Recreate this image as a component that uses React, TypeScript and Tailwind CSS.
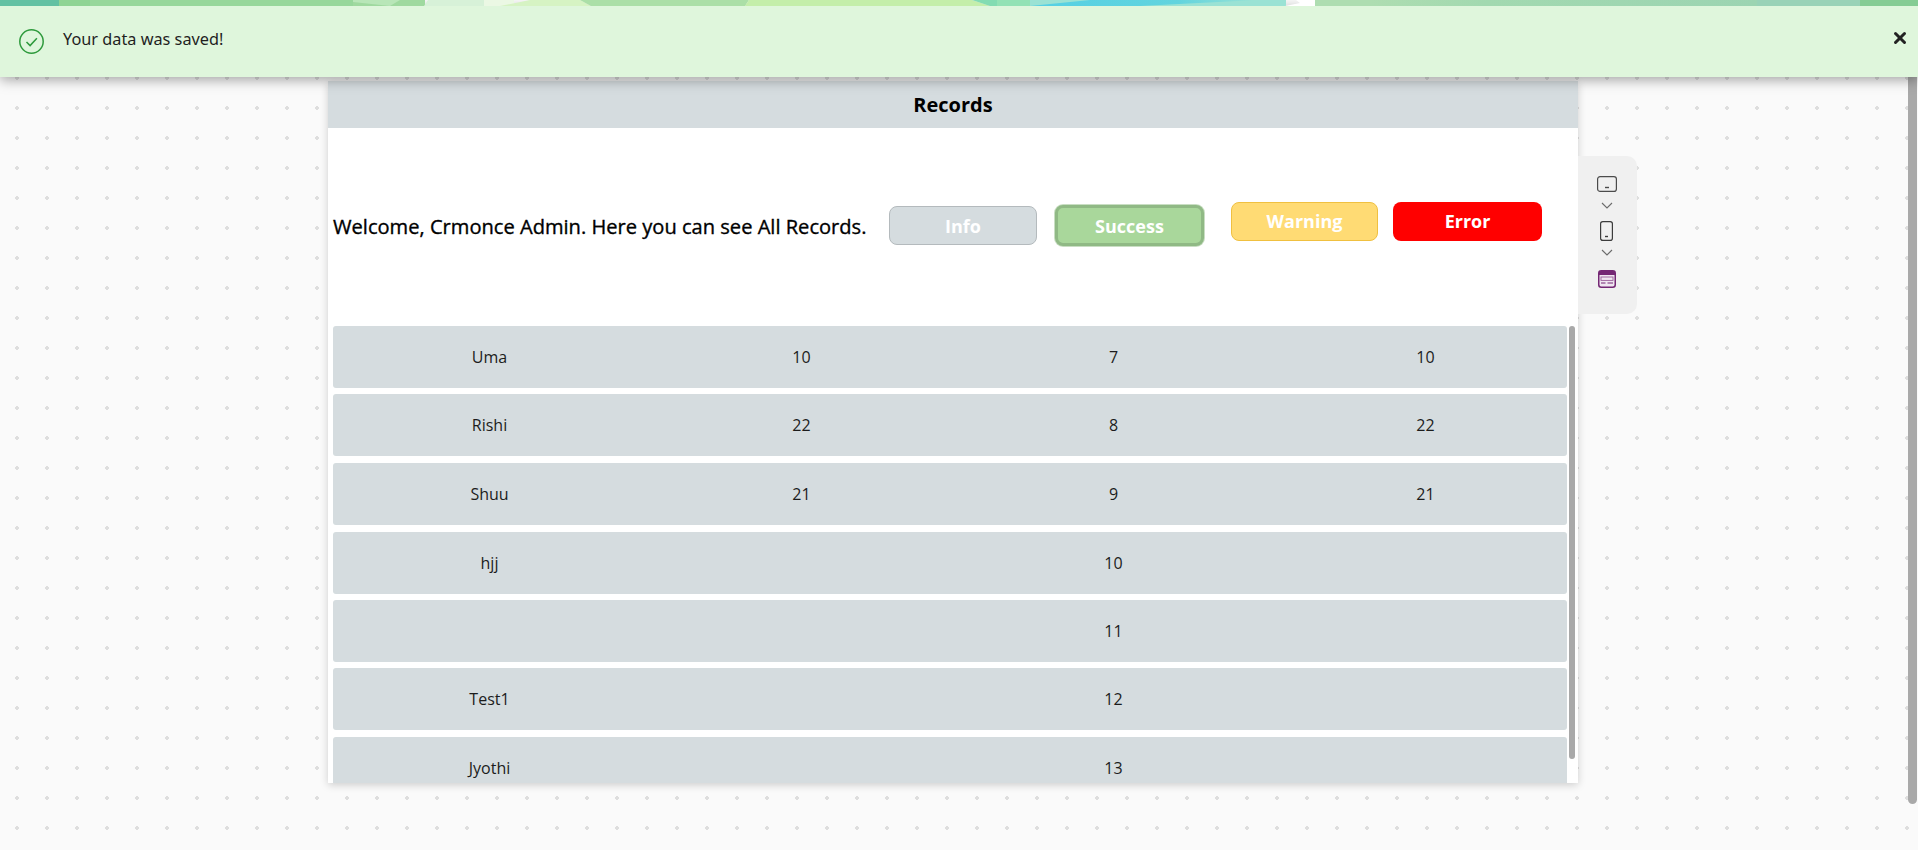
import { X } from 'lucide-react';

const rows = [
  { name: 'Uma', a: '10', b: '7', c: '10' },
  { name: 'Rishi', a: '22', b: '8', c: '22' },
  { name: 'Shuu', a: '21', b: '9', c: '21' },
  { name: 'hjj', a: '', b: '10', c: '' },
  { name: '', a: '', b: '11', c: '' },
  { name: 'Test1', a: '', b: '12', c: '' },
  { name: 'Jyothi', a: '', b: '13', c: '' },
];

function Row({ name, a, b, c }: { name: string; a: string; b: string; c: string }) {
  return (
    <div className="grid grid-cols-[312px_312px_312px_312px] h-[62px] shrink-0 items-center overflow-hidden pl-[1px] bg-[#d5dcdf] rounded-[3px] text-[16px] text-[#1c1c1c] text-center [&:nth-child(4)]:mt-[0.2px]">
      <span>{name}</span>
      <span>{a}</span>
      <span>{b}</span>
      <span>{c}</span>
    </div>
  );
}

function SidePanel() {
  return (
    <div className="mt-[75px] w-[59px] h-[158px] bg-[#f0f0f0] rounded-r-[10px] flex flex-col items-center pt-[20px] pr-[2px]">
      <svg width="20" height="16" viewBox="0 0 20 16" fill="none" stroke="#4b4b4b" strokeWidth="1.2">
        <rect x="0.6" y="0.6" width="18.8" height="14.8" rx="2.5" />
        <path d="M8 11.5h4" strokeWidth="1.4" />
      </svg>
      <svg className="mt-[10px]" width="12" height="7" viewBox="0 0 12 7" fill="none" stroke="#6b6b6b" strokeWidth="1.1">
        <path d="M1 1l5 5 5-5" />
      </svg>
      <svg className="mt-[12px]" width="13" height="20" viewBox="0 0 13 20" fill="none" stroke="#3c3c3c" strokeWidth="1.2">
        <rect x="0.6" y="0.6" width="11.8" height="18.8" rx="2.2" />
        <path d="M5 15.5h3" strokeWidth="1.4" />
      </svg>
      <svg className="mt-[8px]" width="12" height="7" viewBox="0 0 12 7" fill="none" stroke="#6b6b6b" strokeWidth="1.1">
        <path d="M1 1l5 5 5-5" />
      </svg>
      <svg className="mt-[14px]" width="18" height="18" viewBox="0 0 18 18" fill="none">
        <rect x="0.75" y="0.75" width="16.5" height="16.5" rx="2.5" fill="#efe6f0" stroke="#742774" strokeWidth="1.5" />
        <path d="M1 2.5a1.5 1.5 0 0 1 1.5-1.5h13a1.5 1.5 0 0 1 1.5 1.5V5H1z" fill="#742774" />
        <rect x="3" y="7" width="12" height="3.4" fill="none" stroke="#9a5f9a" strokeWidth="0.9" />
        <path d="M3 13h4.5M9.5 13H15" stroke="#742774" strokeWidth="1.2" />
      </svg>
    </div>
  );
}

// The sliver of the header picture that stays visible above the toast
function HeaderStrip() {
  return (
    <svg className="absolute z-20 top-0 left-0" width="1918" height="6" viewBox="0 0 1918 6">
      <defs>
        <linearGradient id="blue" x1="0" x2="1" y1="0" y2="0">
          <stop offset="0" stopColor="#55d0e4" />
          <stop offset="0.65" stopColor="#62d4de" />
          <stop offset="1" stopColor="#9ae2d4" />
        </linearGradient>
        <linearGradient id="rest" x1="0" x2="1" y1="0" y2="0">
          <stop offset="0" stopColor="#aeddb1" />
          <stop offset="0.3" stopColor="#a2d9b0" />
          <stop offset="1" stopColor="#9cd4b2" />
        </linearGradient>
      </defs>
      <rect x="0" y="0" width="60" height="6" fill="#63c1a3" />
      <rect x="59" y="0" width="31" height="6" fill="#8fd494" />
      <rect x="90" y="0" width="263" height="6" fill="#97d79b" />
      <rect x="353" y="0" width="72" height="6" fill="#9fd99f" />
      <polygon points="353,0 400,0 390,6 353,2" fill="#b8e6b8" />
      <polygon points="428,0 484,0 484,6 424,6" fill="#d7f1d8" />
      <rect x="484" y="0" width="30" height="6" fill="#ebf8e4" />
      <polygon points="530,0 580,0 591,6 500,6" fill="#d6f3c3" />
      <polygon points="580,0 749,0 745,6 591,6" fill="#abdfa7" />
      <polygon points="749,0 972,0 990,6 745,6" fill="#c4eeaa" />
      <polygon points="972,0 1000,0 997,6 990,6" fill="#83dcb2" />
      <rect x="997" y="0" width="90" height="6" fill="#93e2b5" />
      <rect x="1030" y="0" width="256" height="6" fill="#9ae2d4" />
      <polygon points="1030,6 1090,0 1258,0 1140,6" fill="url(#blue)" />
      <polygon points="1285,6 1300,3 1296,0 1315,0 1315,6" fill="#ffffff" />
      <rect x="1315" y="0" width="55" height="6" fill="#aeddb1" />
      <rect x="1370" y="0" width="387" height="6" fill="url(#rest)" />
      <rect x="1757" y="0" width="103" height="6" fill="#99d2b7" />
      <rect x="1860" y="0" width="58" height="6" fill="#85cc94" />
    </svg>
  );
}

export default function App() {
  return (
    <div className="relative h-[850px] overflow-hidden bg-[#fafafa] bg-[radial-gradient(circle,#dedede_1.6px,transparent_2px)] bg-[size:30px_30px] bg-[position:2px_3px] font-['Open_Sans',sans-serif]">
      <HeaderStrip />

      {/* Save toast */}
      <div className="absolute z-10 top-[6px] left-0 right-0 h-[71px] flex items-start bg-[#dff6dc] shadow-[0_3px_12px_rgba(0,0,0,0.35)]">
        <svg className="ml-[19px] mt-[23px]" width="25" height="25" viewBox="0 0 25 25" fill="none" stroke="#2e9a3c" strokeWidth="1.5">
          <circle cx="12.5" cy="12.5" r="11.7" />
          <path d="M7.5 13l3.6 3.6 6.8-7.4" />
        </svg>
        <span className="ml-[19px] mt-[21px] text-[16.3px] leading-[24px] text-[#1f1f1f] font-['Noto_Sans',sans-serif]">Your data was saved!</span>
        <X className="ml-auto mr-[9px] mt-[23px]" size={18} strokeWidth={4} color="#222222" />
      </div>

      {/* Page scrollbar */}
      <div className="absolute top-[77px] right-[1px] w-[9px] h-[727px] rounded-b-[5px] bg-[#a9a9a9]" />

      <div className="flex pl-[328px] pt-[81px]">
        <div className="w-[1250px] h-[702px] bg-white shadow-[0_2px_8px_rgba(0,0,0,0.18)] flex flex-col overflow-hidden">
          <div className="h-[47px] shrink-0 flex items-center justify-center bg-[#d5dcdf] text-[20px] font-bold text-black">Records</div>

          <div className="h-[198px] shrink-0 flex items-start pl-[5px]">
            <span className="mt-[84px] w-[556px] shrink-0 whitespace-nowrap text-[20.1px] text-black leading-[30px] [-webkit-text-stroke:0.35px_black]">Welcome, Crmonce Admin. Here you can see All Records.</span>
            <button className="mt-[78px] pt-[1px] w-[148px] h-[39px] rounded-lg bg-[#d5dcdf] border border-[#b4babd] text-[18px] font-bold text-white">Info</button>
            <button className="ml-[18px] mt-[77px] pt-[1px] w-[149px] h-[41px] rounded-lg bg-[#a9d79b] border-[3px] border-[#90b985] shadow-[0_0_0_1px_#c9dec3] text-[18px] font-bold text-white">Success</button>
            <button className="ml-[27px] mt-[74px] w-[147px] h-[39px] rounded-lg bg-[#ffdb74] border border-[#f0c040] text-[18px] font-bold text-white">Warning</button>
            <button className="ml-[15px] mt-[74px] w-[149px] h-[39px] rounded-lg bg-[#ff0000] text-[18px] font-bold text-white">Error</button>
          </div>

          <div className="relative flex-1 min-h-0 pl-[4.5px] pr-[11.5px] flex flex-col gap-[6.45px] overflow-hidden">
            {rows.map((r) => (
              <Row key={r.b} name={r.name} a={r.a} b={r.b} c={r.c} />
            ))}
            <div className="absolute top-0 right-[3px] w-[6px] h-[433px] rounded-[3px] bg-[#a9a9a9]" />
          </div>
        </div>
        <SidePanel />
      </div>
    </div>
  );
}
